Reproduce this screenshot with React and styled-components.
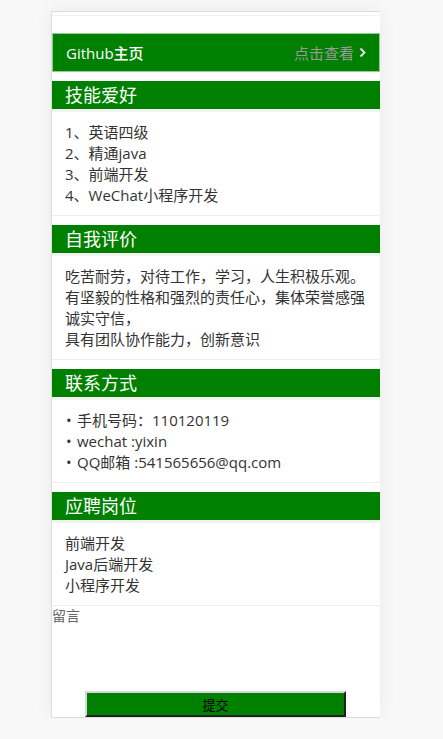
import React from "react";
import styled, { createGlobalStyle } from "styled-components";

const GlobalStyle = createGlobalStyle`
  html, body {
    margin: 0;
    padding: 0;
    background: #f8f8f8;
  }
  body {
    font-family: "Open Sans", "Noto Sans CJK SC", sans-serif;
    color: #333;
  }
`;

const Phone = styled.div`
  width: 328px;
  margin: 11px 0 0 51px;
  background: #fff;
  border: 1px solid #dcdcdc;
  border-right: none;
  box-shadow: 0 0 18px rgba(0, 0, 0, 0.06);
  display: flex;
  flex-direction: column;
`;

const TopStrip = styled.div`
  height: 21px;
  box-sizing: border-box;
  border-top: 3px solid #fff;
  background: #fff;

  &::before {
    content: "";
    display: block;
    height: 1px;
    background: #f2f2f2;
  }
`;

const LinkBar = styled.div`
  height: 39px;
  box-sizing: border-box;
  background: #008000;
  border: 1px solid #8fcf8f;
  display: flex;
  align-items: center;
  justify-content: space-between;
  padding: 0 13px;
`;

const LinkTitle = styled.span`
  color: #fff;
  font-size: 15px;
  font-weight: 500;
`;

const LinkMore = styled.span`
  display: flex;
  align-items: center;
  gap: 5px;
  color: #9a9a9a;
  font-size: 15px;
`;

const Section = styled.section`
  margin-top: 9px;
  border-bottom: 1px solid #eee;
`;

const SectionHead = styled.h2`
  margin: 0;
  height: 28px;
  line-height: 28px;
  background: #008000;
  color: #fff;
  font-size: 18px;
  font-weight: 400;
  padding-left: 13px;
  border-bottom: 3px solid #f2f2f2;
`;

const SectionBody = styled.div`
  padding: 10px 13px 9px;
  font-size: 15px;
  line-height: 21px;
  color: #333;
`;

const Line = styled.div`
  display: flex;

  &::before {
    content: "•";
    display: ${(p) => (p.bullet ? "block" : "none")};
    width: 11px;
    margin-left: 1px;
  }
`;

const Label = styled.div`
  font-size: 14px;
  line-height: 20px;
  color: #666;
  height: 85px;
`;

const Submit = styled.button`
  align-self: flex-start;
  margin-left: 33px;
  width: 261px;
  height: 26px;
  background: #008000;
  border: 2px outset #d8d8d8;
  border-right-color: #777;
  border-bottom-color: #777;
  font-family: "Noto Sans CJK SC", sans-serif;
  font-size: 13px;
  color: #000;
  padding: 0;
`;

const sections = [
  {
    title: "技能爱好",
    lines: ["1、英语四级", "2、精通java", "3、前端开发", "4、WeChat小程序开发"],
  },
  {
    title: "自我评价",
    lines: [
      "吃苦耐劳，对待工作，学习，人生积极乐观。",
      "有坚毅的性格和强烈的责任心，集体荣誉感强",
      "诚实守信，",
      "具有团队协作能力，创新意识",
    ],
  },
  {
    title: "联系方式",
    bullet: true,
    lines: ["手机号码：110120119", "wechat :yixin", "QQ邮箱 :541565656@qq.com"],
  },
  {
    title: "应聘岗位",
    lines: ["前端开发", "Java后端开发", "小程序开发"],
  },
];

export default function App() {
  return (
    <>
      <GlobalStyle />
      <Phone>
        <TopStrip />
        <LinkBar>
          <LinkTitle>Github主页</LinkTitle>
          <LinkMore>
            点击查看
            <svg width="7" height="11" viewBox="0 0 7 11">
              <path d="M1.5 1.5 L5.5 5.5 L1.5 9.5" fill="none" stroke="#e6e6e6" strokeWidth="1.8" />
            </svg>
          </LinkMore>
        </LinkBar>
        {sections.map((s) => (
          <Section key={s.title}>
            <SectionHead>{s.title}</SectionHead>
            <SectionBody>
              {s.lines.map((l) => (
                <Line key={l} bullet={s.bullet}>
                  {l}
                </Line>
              ))}
            </SectionBody>
          </Section>
        ))}
        <Label>留言</Label>
        <Submit>提交</Submit>
      </Phone>
    </>
  );
}
